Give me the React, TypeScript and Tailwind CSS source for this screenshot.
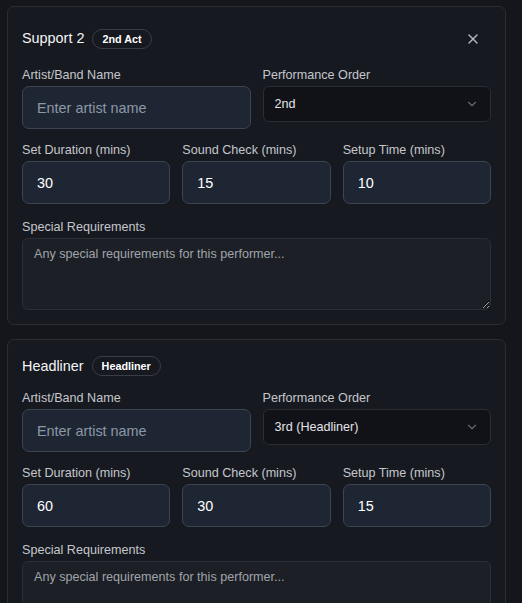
import { ChevronDown, X } from "lucide-react";

type Performer = {
  title: string;
  badge: string;
  order: string;
  removable: boolean;
  duration: string;
  soundCheck: string;
  setup: string;
};

const PERFORMERS: Performer[] = [
  {
    title: "Support 2",
    badge: "2nd Act",
    order: "2nd",
    removable: true,
    duration: "30",
    soundCheck: "15",
    setup: "10",
  },
  {
    title: "Headliner",
    badge: "Headliner",
    order: "3rd (Headliner)",
    removable: false,
    duration: "60",
    soundCheck: "30",
    setup: "15",
  },
];

const inputClass =
  "h-[43px] w-full rounded-[7px] border border-[#3d4451] bg-[#1f2633] px-[14px] text-[14.4px] text-white outline-none placeholder:text-[#8c97a8] [color-scheme:dark]";

function FieldLabel({ children }: { children: React.ReactNode }) {
  return (
    <label className="mb-[2px] block text-[12.6px] leading-[18px] text-[#c4c7cc]">
      {children}
    </label>
  );
}

function PerformerCard({ p }: { p: Performer }) {
  return (
    <div className="w-[499px] rounded-[7px] border border-[#2a2d34] bg-[#171920] p-[14px]">
      {/* Header */}
      <div
        className={
          p.removable
            ? "mb-[10px] flex h-[35px] items-center justify-between"
            : "mb-[11px] flex h-[24px] items-center justify-between"
        }
      >
        <div className="flex items-center gap-2">
          <h3 className="text-[14.4px] font-medium leading-[21px] text-[#f3f4f6]">
            {p.title}
          </h3>
          <span className="rounded-full border border-[#3a3d45] px-[9px] py-[2px] text-[10.8px] font-bold leading-[14px] text-white">
            {p.badge}
          </span>
        </div>
        {p.removable && (
          <button className="flex h-[35px] w-9 items-center justify-center text-[#b4b7bd]">
            <X size={16} strokeWidth={2} />
          </button>
        )}
      </div>

      <div className="flex flex-col gap-3">
        {/* Name + order */}
        <div className="grid grid-cols-2 gap-3">
          <div>
            <FieldLabel>Artist/Band Name</FieldLabel>
            <input className={inputClass} placeholder="Enter artist name" />
          </div>
          <div>
            <FieldLabel>Performance Order</FieldLabel>
            <button className="flex h-9 w-full items-center justify-between rounded-[6px] border border-[#2b2d34] bg-[#111217] px-[11px] text-[12.6px] text-[#e4e4e7]">
              <span>{p.order}</span>
              <ChevronDown size={14} className="text-[#9ca3af] opacity-60" />
            </button>
          </div>
        </div>

        {/* Timings */}
        <div className="grid grid-cols-3 gap-3">
          <div>
            <FieldLabel>Set Duration (mins)</FieldLabel>
            <input type="number" className={inputClass} defaultValue={p.duration} />
          </div>
          <div>
            <FieldLabel>Sound Check (mins)</FieldLabel>
            <input type="number" className={inputClass} defaultValue={p.soundCheck} />
          </div>
          <div>
            <FieldLabel>Setup Time (mins)</FieldLabel>
            <input type="number" className={inputClass} defaultValue={p.setup} />
          </div>
        </div>

        <div className="mt-[2px]">
          <FieldLabel>Special Requirements</FieldLabel>
          <textarea
            className="block h-[72px] w-full resize-y rounded-[6px] border border-[#2b2e35] bg-[#1c1f26] px-[11px] py-[6px] text-[12.6px] leading-[18px] text-white outline-none placeholder:text-[#a1a4aa] [color-scheme:dark]"
            placeholder="Any special requirements for this performer..."
          />
        </div>
      </div>
    </div>
  );
}

export default function App() {
  return (
    <div
      className="h-[603px] overflow-hidden bg-[#14161c] pl-[7px] pt-[6px]"
      style={{ fontFamily: '"Liberation Sans", Arial, sans-serif' }}
    >
      <div className="flex flex-col gap-[14px]">
        {PERFORMERS.map((p) => (
          <PerformerCard key={p.title} p={p} />
        ))}
      </div>
    </div>
  );
}
